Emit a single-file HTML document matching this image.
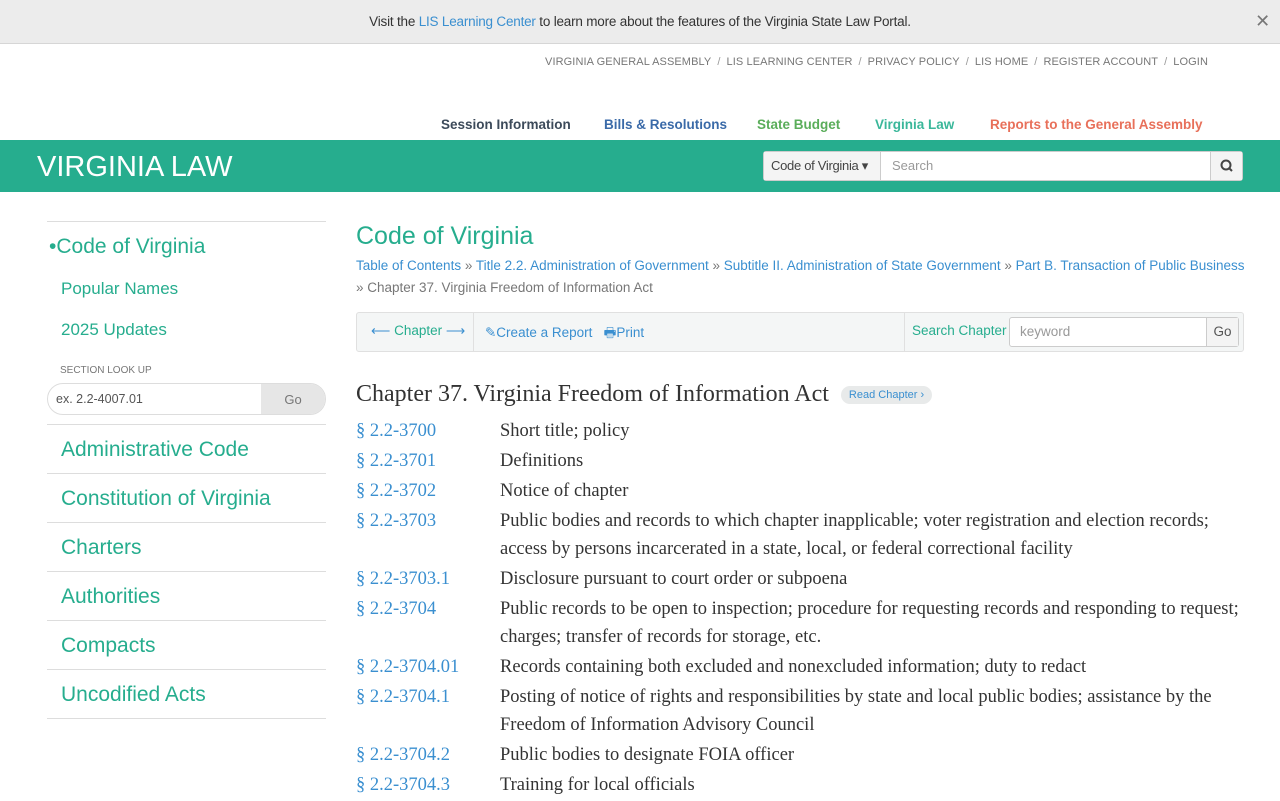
<!DOCTYPE html>
<html><head><meta charset="utf-8"><style>
*{box-sizing:border-box;margin:0;padding:0}
body{width:1280px;height:800px;overflow:hidden;font-family:"Liberation Sans",sans-serif;background:#fff;color:#333}
a{text-decoration:none}
.banner{position:absolute;left:0;top:0;width:1280px;height:44px;background:#ececec;border-bottom:1px solid #d6d6d6;text-align:center;font-size:13.5px;line-height:43px;color:#333;letter-spacing:-0.2px}
.banner a{color:#3a8fd0}
.close{position:absolute;right:10px;top:0;font-size:18px;color:#777}
.util{position:absolute;top:56px;right:72px;font-size:11px;color:#777;letter-spacing:0.1px}
.util span{margin:0 6px;color:#999}
.nav{position:absolute;top:117px;font-size:13.5px;font-weight:bold}
.bar{position:absolute;top:140px;left:0;width:1280px;height:52px;background:#26ad8e}
.bar h1{position:absolute;left:37px;top:11px;font-weight:normal;color:#fff;font-size:29px}
.sbox{position:absolute;left:763px;top:11px;width:480px;height:30px;background:#fff;border:1px solid #ccc;border-radius:3px}
.sbox .dd{position:absolute;left:0;top:0;width:117px;height:28px;background:#f4f4f4;border-right:1px solid #ccc;font-size:13px;line-height:28px;padding-left:7px;color:#444;letter-spacing:-0.3px}
.sbox .ph{position:absolute;left:128px;top:0;line-height:28px;font-size:13px;color:#999}
.sbox .go{position:absolute;right:0;top:0;width:32px;height:28px;background:#f4f4f4;border-left:1px solid #ccc}
.side{position:absolute;left:47px;top:221px;width:279px}
.side .top{border-top:1px solid #ddd}
.sl{font-size:21px;height:49px;line-height:49px;padding-left:14px;border-bottom:1px solid #ddd}
.green{color:#26ad8e}
.main{position:absolute;left:356px}
.toc{position:absolute;left:356px;top:417px;width:890px;font-family:"Liberation Serif",serif;font-size:18.5px;color:#333}
.row{display:flex;line-height:28px;margin-bottom:2px}
.row .n{width:144px;color:#3a8fd0;flex:none}
</style></head><body>
<div class="banner">Visit the <a>LIS Learning Center</a> to learn more about the features of the Virginia State Law Portal.<span class="close">✕</span></div>
<div class="util">VIRGINIA GENERAL ASSEMBLY<span>/</span>LIS LEARNING CENTER<span>/</span>PRIVACY POLICY<span>/</span>LIS HOME<span>/</span>REGISTER ACCOUNT<span>/</span>LOGIN</div>
<div class="nav" style="left:441px;color:#3c4a5a">Session Information</div>
<div class="nav" style="left:604px;color:#3a6aa8">Bills &amp; Resolutions</div>
<div class="nav" style="left:757px;color:#5aad5a">State Budget</div>
<div class="nav" style="left:875px;color:#3ab79a">Virginia Law</div>
<div class="nav" style="left:990px;color:#e8705a">Reports to the General Assembly</div>
<div class="bar"><h1>VIRGINIA LAW</h1>
<div class="sbox"><div class="dd">Code of Virginia ▾</div><div class="ph">Search</div><div class="go"><svg width="32" height="28"><circle cx="15" cy="13" r="4.5" fill="none" stroke="#444" stroke-width="2"/><line x1="18" y1="16" x2="21" y2="19" stroke="#444" stroke-width="2"/></svg></div></div></div>

<div class="side">
<div class="top"></div>
<div style="font-size:21px;margin-top:13px;color:#26ad8e;padding-left:2px">•Code of Virginia</div>
<div style="font-size:17px;margin-top:20px;padding-left:14px;color:#26ad8e">Popular Names</div>
<div style="font-size:17px;margin-top:21px;padding-left:14px;color:#26ad8e">2025 Updates</div>
<div style="font-size:10px;margin-top:25px;padding-left:13px;color:#777">SECTION LOOK UP</div>
<div style="position:relative;margin-top:7px;height:32px;border:1px solid #ddd;border-radius:16px;overflow:hidden"><span style="position:absolute;left:8px;top:8px;font-size:12.5px;color:#555">ex. 2.2-4007.01</span><span style="position:absolute;right:0;top:0;width:64px;height:32px;background:#e6e6e6;text-align:center;line-height:31px;font-size:13px;color:#777">Go</span></div>
<div style="border-bottom:1px solid #ddd;height:10px"></div>
<div class="sl green">Administrative Code</div>
<div class="sl green">Constitution of Virginia</div>
<div class="sl green">Charters</div>
<div class="sl green">Authorities</div>
<div class="sl green">Compacts</div>
<div class="sl green">Uncodified Acts</div>
</div>

<div class="main" style="top:222px;font-size:25px;color:#26ad8e">Code of Virginia</div>
<div class="main" style="top:255px;width:890px;font-size:13.5px;line-height:22px;color:#3a8fd0">Table of Contents <span style="color:#777">»</span> Title 2.2. Administration of Government <span style="color:#777">»</span> Subtitle II. Administration of State Government <span style="color:#777">»</span> Part B. Transaction of Public Business <span style="color:#777">» Chapter 37. Virginia Freedom of Information Act</span></div>
<div class="main" style="top:312px;width:888px;height:40px;background:#f4f6f6;border:1px solid #e0e0e0;border-radius:3px;font-size:13.5px">
<span style="position:absolute;left:14px;top:10px;color:#3a8fd0">⟵ <span class="green">Chapter</span> ⟶</span>
<span style="position:absolute;left:116px;top:0;height:38px;border-left:1px solid #e0e0e0"></span>
<span style="position:absolute;left:128px;top:10px;color:#3a8fd0">✎Create a Report &nbsp; 🖶Print</span>
<span style="position:absolute;left:547px;top:0;height:38px;border-left:1px solid #e0e0e0"></span>
<span style="position:absolute;left:555px;top:10px;color:#26ad8e">Search Chapter</span>
<span style="position:absolute;left:652px;top:4px;width:230px;height:30px;background:#fff;border:1px solid #ccc;border-radius:3px;font-size:13.5px;color:#999;line-height:28px;padding-left:10px">keyword<span style="position:absolute;right:0;top:0;width:32px;height:28px;background:#f4f4f4;border-left:1px solid #ccc;color:#555;text-align:center">Go</span></span>
</div>
<div class="main" style="top:381px;font-family:'Liberation Serif',serif;font-size:24px;color:#333">Chapter 37. Virginia Freedom of Information Act <span style="font-family:'Liberation Sans',sans-serif;font-size:11px;color:#3a8fd0;background:#e8eaea;border-radius:10px;padding:3px 8px;vertical-align:3px;margin-left:6px">Read Chapter ›</span></div>
<div class="toc">
<div class="row"><span class="n">§ 2.2-3700</span><span>Short title; policy</span></div>
<div class="row"><span class="n">§ 2.2-3701</span><span>Definitions</span></div>
<div class="row"><span class="n">§ 2.2-3702</span><span>Notice of chapter</span></div>
<div class="row"><span class="n">§ 2.2-3703</span><span>Public bodies and records to which chapter inapplicable; voter registration and election records; access by persons incarcerated in a state, local, or federal correctional facility</span></div>
<div class="row"><span class="n">§ 2.2-3703.1</span><span>Disclosure pursuant to court order or subpoena</span></div>
<div class="row"><span class="n">§ 2.2-3704</span><span>Public records to be open to inspection; procedure for requesting records and responding to request; charges; transfer of records for storage, etc.</span></div>
<div class="row"><span class="n">§ 2.2-3704.01</span><span>Records containing both excluded and nonexcluded information; duty to redact</span></div>
<div class="row"><span class="n">§ 2.2-3704.1</span><span>Posting of notice of rights and responsibilities by state and local public bodies; assistance by the Freedom of Information Advisory Council</span></div>
<div class="row"><span class="n">§ 2.2-3704.2</span><span>Public bodies to designate FOIA officer</span></div>
<div class="row"><span class="n">§ 2.2-3704.3</span><span>Training for local officials</span></div>
</div>
</body></html>
